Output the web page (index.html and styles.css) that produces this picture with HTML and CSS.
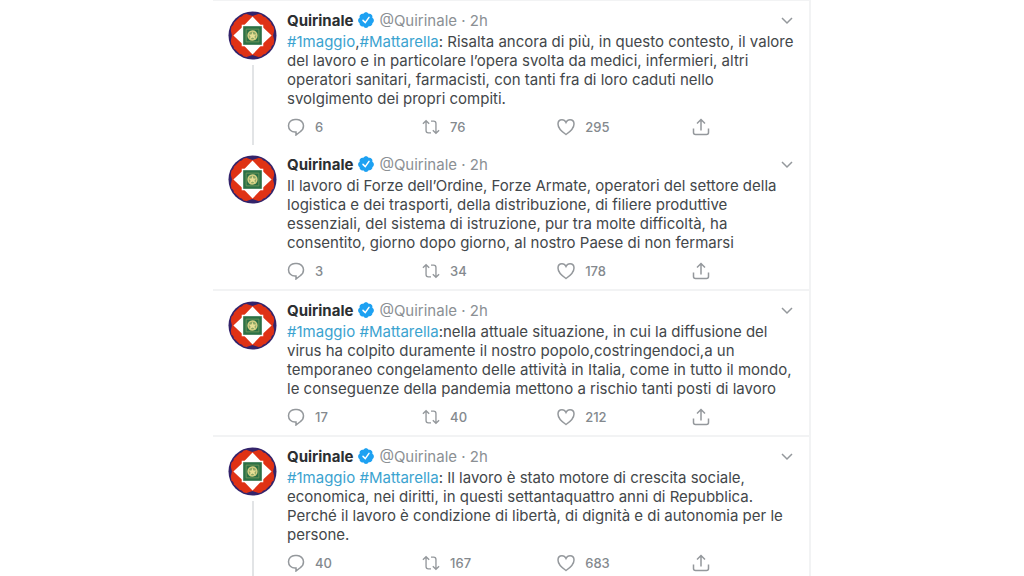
FILE: index.html
```html
<!DOCTYPE html>
<html lang="it">
<head>
    <meta charset="UTF-8">
    <title>Quirinale - Tweet</title>
    <meta name="viewport" content="width=device-width, initial-scale=1.0">
    <link rel="stylesheet" href="styles.css">
</head>
<body>
    <!-- Shared icons -->
    <svg class="sprite" aria-hidden="true">
        <symbol id="avatar" viewBox="0 0 50 50">
            <circle cx="25" cy="25" r="24.500" fill="#34246b"/>
            <path fill="#df3215" d="M16 3.500Q25 1.500 34 3.500L46.500 16Q48.500 25 46.500 34L34 46.500Q25 48.500 16 46.500L3.500 34Q1.500 25 3.500 16Z"/>
            <path fill="#df3215" d="M6 12L12 6L25 4L38 6L44 12L46 25L44 38L38 44L25 46L12 44L6 38L4 25Z"/>
            <path fill="#34246b" d="M16 2H34L25 5ZM16 48H34L25 45ZM2 16V34L4 25ZM48 16V34L46 25Z"/>
            <path fill="#fff" d="M25 5.500L34.500 15.500L44.500 25L34.500 34.500L25 44.500L15.500 34.500L5.500 25L15.500 15.500Z"/>
            <path fill="#fff" d="M14 14H36V36H14Z"/>
            <path fill="#2b7045" d="M15.500 15.500H34.500V34.500H15.500Z"/>
            <path fill="none" stroke="#6d9559" d="M18.500 18.500H31.500V31.500H18.500Z"/>
            <circle cx="25" cy="25" r="4.500" fill="#8ba765" stroke="#d5cf83" stroke-width="1.500"/>
            <path fill="#e7de94" d="M25 21L26 24H29L27 26L28 29L25 27L22 29L23 26L21 24H24Z"/>
        </symbol>
        <symbol id="verified" viewBox="0 0 24 24">
            <path fill="#1da1f2" d="M22.500 12.500c0-1.580-.875-2.950-2.148-3.600.154-.435.238-.905.238-1.400 0-2.210-1.710-3.998-3.818-3.998-.47 0-.92.084-1.336.25C14.818 2.415 13.510 1.500 12 1.500s-2.816.917-3.437 2.250c-.415-.165-.866-.25-1.336-.25-2.110 0-3.818 1.790-3.818 4 0 .494.083.964.237 1.400-1.272.65-2.147 2.018-2.147 3.600 0 1.495.782 2.798 1.942 3.486-.02.170-.032.340-.032.514 0 2.210 1.708 4 3.818 4 .470 0 .920-.086 1.335-.250.620 1.334 1.926 2.250 3.437 2.250 1.512 0 2.818-.916 3.437-2.250.415.163.865.248 1.336.248 2.110 0 3.818-1.790 3.818-4 0-.174-.012-.344-.033-.513 1.158-.687 1.943-1.990 1.943-3.484z"/>
            <path fill="none" stroke="#fff" stroke-width="2" stroke-linecap="round" d="M8 12.500L11 15.500L16 8.500"/>
        </symbol>
        <symbol id="chevron" viewBox="0 0 12 12">
            <path d="M1 4L6 9L11 4"/>
        </symbol>
        <symbol id="reply" viewBox="0 0 18 18">
            <path d="M9 14V17L13.500 13.500C15.500 12.200 16.500 10.200 16.500 7.800C16.500 4.300 13.500 1.500 10 1.500H8C4.300 1.500 1.500 4.300 1.500 7.800C1.500 11.400 4.300 14 8 14H9Z"/>
        </symbol>
        <symbol id="retweet" viewBox="0 0 20 18">
            <path d="M1 5.500L4.500 2L8 5.500M4.500 2.500V13Q4.500 15.500 7 15.500H10M10 2.500H13Q15.500 2.500 15.500 5V15M12 12.500L15.500 16L19 12.500"/>
        </symbol>
        <symbol id="like" viewBox="0 0 18 18">
            <path d="M9 16.500C6 14.500 1 10.500 1 6C1 3.500 2.700 1.700 5 1.700C7 1.700 8.300 3 9 4.500C9.700 3 11 1.700 13 1.700C15.300 1.700 17 3.500 17 6C17 10.500 12 14.500 9 16.500Z"/>
        </symbol>
        <symbol id="share" viewBox="0 0 18 18">
            <path d="M1.500 10.500V14.500Q1.500 16.500 3.500 16.500H14.500Q16.500 16.500 16.500 14.500V10.500M9 12.500V2M5 5.500L9 1.500L13 5.500"/>
        </symbol>
    </svg>

    <main class="feed">
        <article class="tweet first">
            <div class="side">
                <svg class="avatar"><use href="#avatar"/></svg>
                <span class="thread"></span>
            </div>
            <div class="content">
                <header class="tweet-header">
                    <strong>Quirinale</strong>
                    <svg class="verified"><use href="#verified"/></svg>
                    <span class="handle">@Quirinale · 2h</span>
                    <button class="more" aria-label="Altro"><svg><use href="#chevron"/></svg></button>
                </header>
                <p><a href="#">#1maggio</a>,<a href="#">#Mattarella</a>: Risalta ancora di più, in questo contesto, il valore<br>
                del lavoro e in particolare l’opera svolta da medici, infermieri, altri<br>
                operatori sanitari, farmacisti, con tanti fra di loro caduti nello<br>
                svolgimento dei propri compiti.</p>
                <div class="actions">
                    <button aria-label="Rispondi"><svg><use href="#reply"/></svg>6</button>
                    <button aria-label="Ritwitta"><svg><use href="#retweet"/></svg>76</button>
                    <button aria-label="Mi piace"><svg><use href="#like"/></svg>295</button>
                    <button aria-label="Condividi"><svg><use href="#share"/></svg></button>
                </div>
            </div>
        </article>

        <article class="tweet reply">
            <div class="side">
                <svg class="avatar"><use href="#avatar"/></svg>
            </div>
            <div class="content">
                <header class="tweet-header">
                    <strong>Quirinale</strong>
                    <svg class="verified"><use href="#verified"/></svg>
                    <span class="handle">@Quirinale · 2h</span>
                    <button class="more" aria-label="Altro"><svg><use href="#chevron"/></svg></button>
                </header>
                <p>Il lavoro di Forze dell’Ordine, Forze Armate, operatori del settore della<br>
                logistica e dei trasporti, della distribuzione, di filiere produttive<br>
                essenziali, del sistema di istruzione, pur tra molte difficoltà, ha<br>
                consentito, giorno dopo giorno, al nostro Paese di non fermarsi</p>
                <div class="actions">
                    <button aria-label="Rispondi"><svg><use href="#reply"/></svg>3</button>
                    <button aria-label="Ritwitta"><svg><use href="#retweet"/></svg>34</button>
                    <button aria-label="Mi piace"><svg><use href="#like"/></svg>178</button>
                    <button aria-label="Condividi"><svg><use href="#share"/></svg></button>
                </div>
            </div>
        </article>

        <article class="tweet">
            <div class="side">
                <svg class="avatar"><use href="#avatar"/></svg>
            </div>
            <div class="content">
                <header class="tweet-header">
                    <strong>Quirinale</strong>
                    <svg class="verified"><use href="#verified"/></svg>
                    <span class="handle">@Quirinale · 2h</span>
                    <button class="more" aria-label="Altro"><svg><use href="#chevron"/></svg></button>
                </header>
                <p><a href="#">#1maggio</a> <a href="#">#Mattarella</a>:nella attuale situazione, in cui la diffusione del<br>
                virus ha colpito duramente il nostro popolo,costringendoci,a un<br>
                temporaneo congelamento delle attività in Italia, come in tutto il mondo,<br>
                le conseguenze della pandemia mettono a rischio tanti posti di lavoro</p>
                <div class="actions">
                    <button aria-label="Rispondi"><svg><use href="#reply"/></svg>17</button>
                    <button aria-label="Ritwitta"><svg><use href="#retweet"/></svg>40</button>
                    <button aria-label="Mi piace"><svg><use href="#like"/></svg>212</button>
                    <button aria-label="Condividi"><svg><use href="#share"/></svg></button>
                </div>
            </div>
        </article>

        <article class="tweet">
            <div class="side">
                <svg class="avatar"><use href="#avatar"/></svg>
                <span class="thread"></span>
            </div>
            <div class="content">
                <header class="tweet-header">
                    <strong>Quirinale</strong>
                    <svg class="verified"><use href="#verified"/></svg>
                    <span class="handle">@Quirinale · 2h</span>
                    <button class="more" aria-label="Altro"><svg><use href="#chevron"/></svg></button>
                </header>
                <p><a href="#">#1maggio</a> <a href="#">#Mattarella</a>: Il lavoro è stato motore di crescita sociale,<br>
                economica, nei diritti, in questi settantaquattro anni di Repubblica.<br>
                Perché il lavoro è condizione di libertà, di dignità e di autonomia per le<br>
                persone.</p>
                <div class="actions">
                    <button aria-label="Rispondi"><svg><use href="#reply"/></svg>40</button>
                    <button aria-label="Ritwitta"><svg><use href="#retweet"/></svg>167</button>
                    <button aria-label="Mi piace"><svg><use href="#like"/></svg>683</button>
                    <button aria-label="Condividi"><svg><use href="#share"/></svg></button>
                </div>
            </div>
        </article>
    </main>
</body>
</html>
```
FILE: styles.css
```css
* {
    box-sizing: border-box;
}
html {
    scrollbar-width: none;
}
body {
    margin: 0;
    background: #fff;
    color: #43474a;
    font-family: Inter, "Liberation Sans", sans-serif;
    font-size: 15px;
    line-height: 19px;
}
.sprite {
    position: absolute;
    width: 0;
    height: 0;
}
.feed {
    max-width: 598px;
    margin: 0 auto;
    border-right: 2px solid #f2f3f4;
}
.tweet {
    display: flex;
    gap: 10px;
    padding: 10px 16px 0 15px;
    border-top: 2px solid #f2f3f4;
}
.tweet.first {
    border-top-width: 1px;
}
.tweet.reply {
    border-top: none;
}
.side {
    display: flex;
    flex-direction: column;
    align-items: center;
    gap: 5px;
}
.avatar {
    width: 49px;
    height: 49px;
    flex: none;
}
.thread {
    width: 2px;
    flex: 1;
    background: #e2e4e6;
}
.content {
    flex: 1;
    min-width: 0;
    padding-bottom: 8px;
}
.tweet-header {
    display: flex;
    align-items: center;
    height: 18px;
    gap: 4px;
}
.tweet-header strong {
    color: #2b2e31;
    font-weight: 700;
}
.verified {
    width: 18px;
    height: 18px;
}
.handle {
    color: #8b9094;
}
p {
    margin: 3px 0 9px;
    white-space: nowrap;
}
a {
    color: #3ba3d0;
    text-decoration: none;
}
button {
    display: flex;
    align-items: center;
    padding: 0;
    border: none;
    background: none;
    color: #84898e;
    font: inherit;
    cursor: pointer;
}
button svg {
    width: 18px;
    height: 18px;
    fill: none;
    stroke: #94989c;
    stroke-width: 1.5px;
}
.more {
    margin-left: auto;
}
.more svg {
    width: 12px;
    height: 12px;
}
.actions {
    display: grid;
    grid-template-columns: repeat(3, 26.7%) auto;
    height: 20px;
}
.actions button {
    gap: 10px;
    font-size: 13px;
    font-weight: 500;
}
```
